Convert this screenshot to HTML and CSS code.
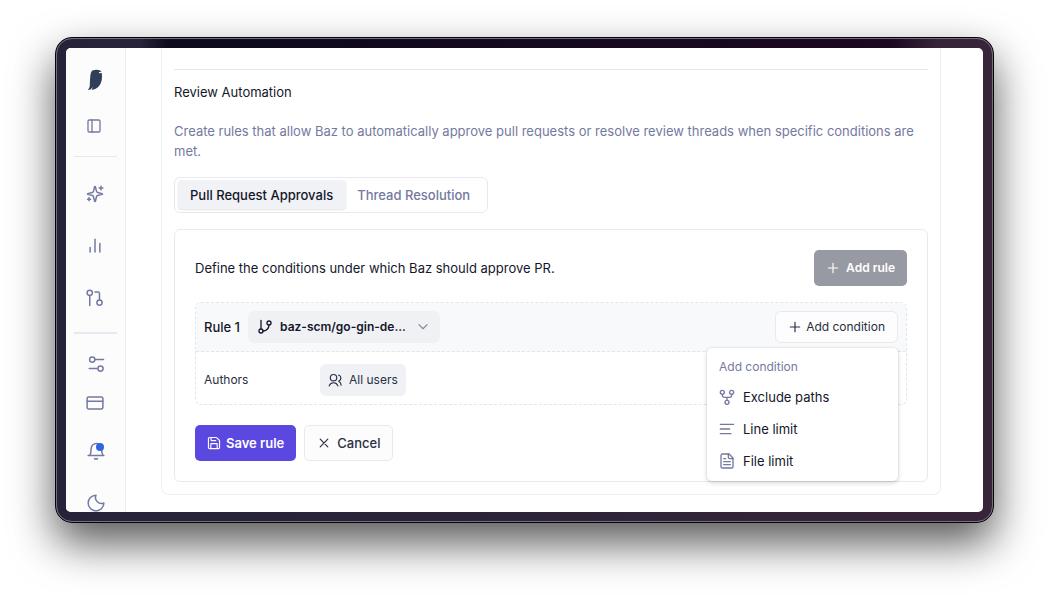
FILE: index.html
```html
<!DOCTYPE html>
<html lang="en">
<head>
    <meta charset="UTF-8">
    <meta name="viewport" content="width=device-width, initial-scale=1.0">
    <title>Review Automation</title>
    <link rel="stylesheet" href="styles.css">
</head>
<body>
    <div class="frame">
        <div class="screen">
            <nav class="sidebar">
                <a href="#" class="logo" aria-label="Baz">
                    <svg width="16" height="22" viewBox="0 0 16 22" fill="#2f3f55">
                        <path d="M5.4 1.6 C7.5 0.4 11 0.4 12.6 1.3 L14.6 2.4 L11.8 3.2 L12.2 4.2 L14.8 4 C15.2 8 15 12 13.4 15 C11.8 17.8 9.6 19.8 6.6 20.6 L4.8 20.9 L5.6 18 L3.6 20.6 L1 21 L2.6 18 C3 15 2.800 12 3.200 8.600 C3.400 6 3.600 3 5.400 1.600 Z"/>
                    </svg>
                </a>
                <button class="toggle" aria-label="Toggle sidebar">
                    <svg class="icon" width="16" height="16" viewBox="0 0 24 24"><rect x="3" y="3" width="18" height="18" rx="2"/><path d="M9 3v18"/></svg>
                </button>
                <hr>
                <div class="nav-main">
                    <a href="#" aria-label="Reviews">
                        <svg class="icon" width="18" height="18" viewBox="0 0 24 24"><path d="M9.94 15.5A2 2 0 0 0 8.5 14.06l-6.14-1.58a.5.5 0 0 1 0-.96L8.5 9.94A2 2 0 0 0 9.94 8.5l1.58-6.14a.5.5 0 0 1 .96 0L14.06 8.5a2 2 0 0 0 1.44 1.44l6.14 1.58a.5.5 0 0 1 0 .96L15.5 14.06a2 2 0 0 0-1.44 1.44l-1.58 6.14a.5.5 0 0 1-.96 0z"/><path d="M20 1.5v5M22.5 4h-5M4 17v4M6 19H2"/></svg>
                    </a>
                    <a href="#" aria-label="Insights">
                        <svg class="icon" width="18" height="18" viewBox="0 0 24 24"><path d="M12 20V3M18.5 20V8.5M5.5 20v-6"/></svg>
                    </a>
                    <a href="#" aria-label="Pull requests">
                        <svg class="icon" width="18" height="18" viewBox="0 0 24 24"><circle cx="18" cy="18" r="3.5"/><circle cx="5" cy="5" r="3.5"/><path d="M12 4h4a2 2 0 0 1 2 2v8.5M5 8.5V22"/></svg>
                    </a>
                </div>
                <hr class="thick">
                <div class="nav-settings">
                    <a href="#" aria-label="Settings">
                        <svg class="icon" width="18" height="18" viewBox="0 0 24 24"><path d="M22 6H10.5M3 18h10.5"/><circle cx="7" cy="6" r="3.5"/><circle cx="18" cy="18" r="3.5"/></svg>
                    </a>
                    <a href="#" aria-label="Billing">
                        <svg class="icon" width="18" height="18" viewBox="0 0 24 24"><rect x="1.5" y="4" width="21" height="16" rx="2"/><path d="M1.5 9.5h21"/></svg>
                    </a>
                </div>
                <div class="nav-bottom">
                    <a href="#" aria-label="Notifications">
                        <svg class="icon" width="18" height="18" viewBox="0 0 24 24"><path d="M10 22a2.500 2.500 0 0 0 4 0M1.500 18h21M3.500 18c1.500-2 2-4 2-9a7 7 0 0 1 14 0c0 5 .5 7 2 9"/></svg>
                        <span class="dot"></span>
                    </a>
                    <button aria-label="Dark mode">
                        <svg class="icon" width="18" height="18" viewBox="0 0 24 24"><path d="M12 1.5a8 8 0 0 0 10.5 10.5A10.5 10.5 0 1 1 12 1.5Z"/></svg>
                    </button>
                </div>
            </nav>

            <main>
                <section class="settings">
                    <hr>
                    <h2>Review Automation</h2>
                    <p class="description">Create rules that allow Baz to automatically approve pull requests or resolve review threads when specific conditions are met.</p>

                    <div class="tabs" role="tablist">
                        <button role="tab" class="active" aria-selected="true">Pull Request Approvals</button>
                        <button role="tab" aria-selected="false">Thread Resolution</button>
                    </div>

                    <div class="card">
                        <div class="card-header">
                            <p>Define the conditions under which Baz should approve PR.</p>
                            <button class="btn btn-disabled">
                                <svg class="icon" width="14" height="14" viewBox="0 0 24 24"><path d="M4 12h16M12 4v16"/></svg>
                                Add rule
                            </button>
                        </div>

                        <div class="rule">
                            <div class="rule-header">
                                <label for="repo">Rule 1</label>
                                <div class="repo">
                                    <svg class="icon" width="16" height="16" viewBox="0 0 24 24"><path d="M6 2v13M18 9a9 9 0 0 1-9 9"/><circle cx="18" cy="6" r="3"/><circle cx="6" cy="18" r="3"/></svg>
                                    <select id="repo">
                                        <option>baz-scm/go-gin-de...</option>
                                    </select>
                                    <svg class="icon chevron" width="14" height="14" viewBox="0 0 24 24"><path d="m5 8 7 7 7-7"/></svg>
                                </div>
                                <div class="condition">
                                    <button class="btn-condition" aria-haspopup="menu" aria-expanded="true">
                                        <svg class="icon" width="14" height="14" viewBox="0 0 24 24"><path d="M4 12h16M12 4v16"/></svg>
                                        Add condition
                                    </button>
                                    <div class="menu" role="menu">
                                        <div class="menu-title">Add condition</div>
                                        <button role="menuitem">
                                            <svg class="icon" width="16" height="16" viewBox="0 0 24 24"><circle cx="12" cy="20" r="3"/><circle cx="5" cy="5" r="3"/><circle cx="19" cy="5" r="3"/><path d="M5 8v1.500a3 3 0 0 0 3 3h8a3 3 0 0 0 3-3V8M12 12.500V17"/></svg>
                                            Exclude paths
                                        </button>
                                        <button role="menuitem">
                                            <svg class="icon" width="16" height="16" viewBox="0 0 24 24"><path d="M2 5h20M2 12h14M2 19h16"/></svg>
                                            Line limit
                                        </button>
                                        <button role="menuitem">
                                            <svg class="icon" width="16" height="16" viewBox="0 0 24 24"><path d="M15 1.500H5a2 2 0 0 0-2 2v17a2 2 0 0 0 2 2h14a2 2 0 0 0 2-2v-13z"/><path d="M14 1.500v5a2 2 0 0 0 2 2h5M10 8.500H7M17 13H7M17 17.500H7"/></svg>
                                            File limit
                                        </button>
                                    </div>
                                </div>
                            </div>
                            <div class="rule-row">
                                <span class="rule-name">Authors</span>
                                <button class="users">
                                    <svg class="icon" width="14" height="14" viewBox="0 0 24 24"><path d="M2 22a8 8 0 0 1 15 0"/><circle cx="9.500" cy="8" r="5.500"/><path d="M22.500 21c0-3.400-1.500-5.500-4-7a5.500 5.500 0 0 0-.5-10.500"/></svg>
                                    All users
                                </button>
                            </div>
                        </div>

                        <div class="actions">
                            <button class="btn btn-primary">
                                <svg class="icon" width="14" height="14" viewBox="0 0 24 24"><path d="M15.500 2.500a2 2 0 0 1 1.400.6l4 4a2 2 0 0 1 .6 1.400V19.500a2 2 0 0 1-2 2h-15a2 2 0 0 1-2-2v-15a2 2 0 0 1 2-2z"/><path d="M17.500 21v-7a1 1 0 0 0-1-1h-9a1 1 0 0 0-1 1v7M7 3v4a1 1 0 0 0 1 1h7"/></svg>
                                Save rule
                            </button>
                            <button class="btn btn-cancel">
                                <svg class="icon" width="14" height="14" viewBox="0 0 24 24"><path d="M18.500 5.500l-13 13M5.500 5.500l13 13"/></svg>
                                Cancel
                            </button>
                        </div>
                    </div>
                </section>
            </main>
        </div>
    </div>
</body>
</html>
```

FILE: styles.css
```css
* {
    box-sizing: border-box;
}
body {
    margin: 0;
    padding: 37px 55px 73px;
    height: 100vh;
    background-color: #fff;
    font-family: Inter, "Liberation Sans", sans-serif;
    font-size: 13px;
    line-height: 20px;
    color: #14172a;
    overflow: hidden;
}
button, select {
    font: inherit;
    color: inherit;
    cursor: pointer;
}
h2, p, hr {
    margin: 0;
}
hr {
    border: none;
    height: 1px;
    flex-shrink: 0;
    background-color: #e8e8ec;
}
.icon {
    display: block;
    flex-shrink: 0;
    fill: none;
    stroke: currentColor;
    stroke-width: 2;
    stroke-linecap: round;
    stroke-linejoin: round;
}

/* window */
.frame {
    height: 100%;
    padding: 10px;
    border: 1px solid #050308;
    border-radius: 17px;
    background-image:
        linear-gradient(90deg, transparent 9%, #0c0a1c 12%, #1c0820 89%, transparent 94%),
        linear-gradient(90deg, #25233a, #2c2438 50%, #38243a);
    background-size: 100% 12px, 100% 100%;
    background-repeat: no-repeat;
    box-shadow: 0 20px 44px rgba(0, 0, 0, 0.66);
    outline: 1px solid #75717c;
    outline-offset: -2px;
}
.screen {
    display: flex;
    height: 100%;
    border-radius: 5px;
    background-color: #fff;
    overflow: hidden;
}

/* sidebar */
.sidebar {
    display: flex;
    flex-direction: column;
    width: 60px;
    flex-shrink: 0;
    padding: 0 8px;
    border-right: 1px solid #ececf0;
    background-color: #fcfcfd;
    color: #7479a0;
}
.sidebar a, .sidebar button {
    display: flex;
    justify-content: center;
    align-items: center;
    flex-shrink: 0;
    height: 52px;
    padding: 0;
    border: none;
    background: none;
    color: inherit;
}
.sidebar .logo {
    height: 40px;
    margin-top: 12px;
    padding-right: 2px;
}
.sidebar .toggle {
    padding-right: 3px;
}
.sidebar hr {
    margin-top: 4px;
}
.sidebar .thick {
    height: 2px;
    margin-top: 8px;
    background-color: #e8e8f0;
}
.nav-main {
    padding: 11px 2px 0 0;
}
.nav-settings {
    padding-top: 10px;
}
.sidebar .nav-settings a {
    height: 39px;
}
.nav-settings a:last-child {
    padding-right: 2px;
}
.nav-bottom {
    display: flex;
    flex-direction: column;
    padding-top: 3px;
}
.nav-bottom a {
    position: relative;
}
.dot {
    position: absolute;
    top: 18px;
    left: 22px;
    width: 8px;
    height: 8px;
    border-radius: 50%;
    background-color: #2f66e0;
}

/* content */
main {
    flex: 1;
    min-width: 0;
    padding: 0 42px 0 35px;
}
.settings {
    padding: 21px 12px 12px;
    border: 1px solid #efeff3;
    border-top: none;
    border-radius: 0 0 8px 8px;
}
h2 {
    margin-top: 12px;
    font-size: 13px;
    font-weight: 400;
}
.description {
    margin-top: 19px;
    color: #7479a0;
}
.tabs {
    display: inline-flex;
    height: 36px;
    margin-top: 16px;
    padding: 2px 6px 3px 3px;
    border: 1px solid #e8e8ee;
    border-radius: 6px;
    vertical-align: top;
}
.tabs button {
    padding: 0 11px;
    border: none;
    border-radius: 4px;
    background: none;
    font-weight: 500;
    color: #7479a0;
}
.tabs .active {
    padding: 0 13px 0 12px;
    background-color: #f1f2f6;
    box-shadow: 0 1px 2px rgba(0, 0, 0, 0.12);
    color: #14172a;
}
.card {
    margin-top: 16px;
    padding: 20px;
    border: 1px solid #e8e8ee;
    border-radius: 6px;
}
.card-header {
    display: flex;
    justify-content: space-between;
    align-items: center;
}
.btn {
    display: flex;
    align-items: center;
    gap: 6px;
    height: 36px;
    padding: 0 11px;
    border: 1px solid transparent;
    border-radius: 5px;
    font-weight: 600;
}
.btn-disabled {
    background-color: #989aa3;
    color: #fff;
    font-size: 12px;
}
.btn-primary {
    gap: 5px;
    background-color: #5b48e0;
    color: #fff;
}
.btn-cancel {
    padding: 0 12px;
    border-color: #e8e8ee;
    background-color: #fcfcfd;
    color: #2b2e42;
    font-weight: 500;
}
.rule {
    margin-top: 16px;
    border: 1px dashed #e4e5ea;
    border-radius: 6px;
}
.rule-header {
    display: flex;
    align-items: center;
    gap: 8px;
    height: 49px;
    padding: 0 8px;
    border-bottom: 1px dashed #e4e5ea;
    border-radius: 6px 6px 0 0;
    background-color: #f8f9fb;
}
.rule-header label {
    font-weight: 500;
}
.repo {
    display: flex;
    align-items: center;
    width: 192px;
    height: 32px;
    padding: 0 10px 0 9px;
    border-radius: 6px;
    background-color: #f0f1f5;
    font-size: 12px;
    font-weight: 600;
}
.repo select {
    flex: 1;
    min-width: 0;
    padding: 0 0 0 7px;
    border: none;
    background: none;
    appearance: none;
}
.chevron {
    color: #85878f;
}
.condition {
    position: relative;
    margin-left: auto;
}
.btn-condition {
    display: flex;
    align-items: center;
    gap: 4px;
    height: 32px;
    padding: 0 12px;
    border: 1px solid #e8e8ee;
    border-radius: 6px;
    background-color: #fdfdfe;
    color: #2b2e42;
    font-size: 12px;
}
.menu {
    position: absolute;
    top: 37px;
    right: 0;
    z-index: 1;
    width: 191px;
    padding: 4px 0;
    border-radius: 5px;
    background-color: #fff;
    box-shadow: 0 0 0 1px rgba(0, 0, 0, 0.04), 0 2px 5px rgba(0, 0, 0, 0.16);
}
.menu-title {
    padding: 5px 12px 4px;
    color: #7479a0;
    font-size: 12px;
}
.menu button {
    display: flex;
    align-items: center;
    gap: 8px;
    width: 100%;
    height: 32px;
    padding: 0 12px;
    border: none;
    background: none;
    text-align: left;
}
.menu .icon {
    color: #7479a0;
}
.rule-row {
    display: flex;
    align-items: center;
    padding: 12px 8px 8px;
    color: #2b2e42;
    font-size: 12px;
}
.rule-name {
    width: 116px;
}
.users {
    display: flex;
    align-items: center;
    gap: 7px;
    height: 32px;
    padding: 0 8px;
    border: none;
    border-radius: 6px;
    background-color: #f0f1f5;
}
.actions {
    display: flex;
    gap: 8px;
    margin-top: 20px;
}
```
